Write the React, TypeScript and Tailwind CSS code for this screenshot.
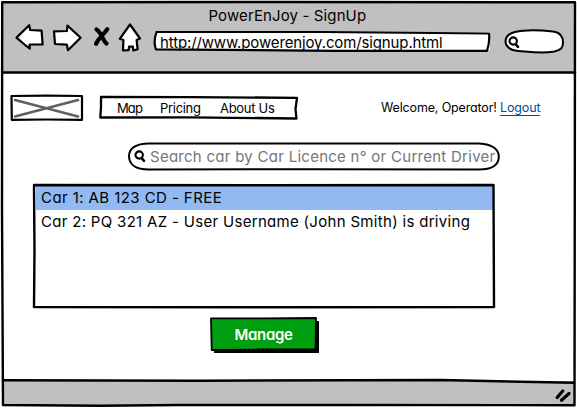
import React from "react";

function Outline({ width, height, children }: { width: number; height: number; children: React.ReactNode }) {
  return (
    <svg
      className="pointer-events-none absolute left-0 top-0 overflow-visible"
      width={width}
      height={height}
      fill="none"
      stroke="#000"
      strokeWidth="2.2"
      strokeLinejoin="round"
      strokeLinecap="round"
    >
      {children}
    </svg>
  );
}

function Magnifier() {
  return (
    <svg className="shrink-0" width="12" height="13" viewBox="0 0 12 13" fill="none" stroke="#000" strokeWidth="2.1" strokeLinecap="round">
      <ellipse cx="5.2" cy="5" rx="3.7" ry="3.6" />
      <path d="M7.6 8.2 10 10.8" strokeWidth="2.6" />
    </svg>
  );
}

function Toolbar() {
  return (
    <header className="relative h-[72px] shrink-0 bg-[#c0c0c0]">
      <h1 className="pl-[208.5px] pt-[5px] text-[15px] leading-5 font-normal tracking-[0.12px]">PowerEnJoy - SignUp</h1>
      <div className="mt-px flex h-7 items-center pl-[15px]">
        <svg className="mt-[-6px] shrink-0" width="130" height="30" viewBox="0 0 130 30" fill="#fff" stroke="#000" strokeWidth="2.2" strokeLinejoin="round">
          <path d="M1.5 14.6 14.2 2.2 15.2 7 26.6 7.6 27.6 21.4 14.6 21.5 14.8 25.6 9.5 21.5Z" />
          <path d="M39 8.4 52 8 52.4 2.5 65.6 14.8 53 27.3 51.8 21.6 40 21Z" />
          <path d="M81.5 6.5c5 3 6 11 10 14M92.3 6.2c-4 6-8 8-11.3 14.5" fill="none" strokeWidth="4.2" strokeLinecap="round" />
          <path d="m115 1.5 10 14-3.4 1.5 1 9.2-4.3 1.3-.4-3.8-3.8-.2-.5 3.7-5.6.3.4-10.5-3.6-1.2Z" />
        </svg>
        <div className="relative ml-[10px] h-[18px] w-[335px] bg-white pl-[5px] pt-px">
          <p className="whitespace-nowrap pt-px text-[15px] leading-[18px] tracking-[-0.13px]">http://www.powerenjoy.com/signup.html</p>
          <Outline width={335} height={19}>
            <path d="M1.5 0 167 0 334 1.5 Q335 10 332 18.8 L180 18.8 1 17.3 Q-2 10 1.5 0" strokeWidth="2.2" />
          </Outline>
        </div>
        <div className="relative ml-[15px] flex h-[23px] w-[59px] items-center">
          <Outline width={59} height={23}>
            <path d="M10 2C20-.5 35 0 48 1.5 55 2 58 7 58 12 58.3 18 55.5 20 49.5 21.5 36 24 22 21.5 13 21 5 20.5.5 16 .5 11.5.7 7 4 3.5 10 2Z" fill="#fff" strokeWidth="2" />
          </Outline>
          <div className="relative ml-[3px] mt-[2px]"><Magnifier /></div>
        </div>
      </div>
    </header>
  );
}

function PageHeader() {
  return (
    <div className="flex h-[24px] items-center pl-[11px] text-[13px] leading-4">
      <div className="relative h-6 w-[72px]">
        <Outline width={72} height={24}>
          <path d="m4 4 63 16.5M67 4 4 20.5" stroke="#606060" strokeWidth="2.6" />
          <path d="M.5 0 36-.3 71 0V23.8L35 23.5.8 23.8Z" strokeWidth="2.2" />
        </Outline>
      </div>
      <nav className="relative ml-[17px] flex h-[22px] w-[197px] items-center pl-[17px]">
        <a className="w-[43px] tracking-[-0.9px]">Map</a>
        <a className="w-[60px] tracking-[-0.3px]">Pricing</a>
        <a className="whitespace-nowrap tracking-[-0.3px]">About Us</a>
        <Outline width={197} height={22}>
          <path d="M1 -.1 90 .1 197 .8 195.5 12 196.5 21.5 90 20.3.3 20.5 1 10Z" strokeWidth="2.3" />
        </Outline>
      </nav>
      <p className="ml-[84px] whitespace-nowrap text-[12.5px] tracking-[-0.15px]">
        Welcome, Operator! <a className="border-b border-[#004b9b] text-[#004b9b]">Logout</a>
      </p>
    </div>
  );
}

function SearchField() {
  return (
    <div className="relative ml-[129px] mt-[23px] flex h-[27px] w-[371px] items-center pl-[5px]">
      <Magnifier />
      <span className="ml-[4px] whitespace-nowrap text-[15px] leading-5 tracking-[0.27px] text-[#74747e]">Search car by Car Licence n° or Current Driver</span>
      <Outline width={371} height={26}>
        <path d="M20 .5 Q190 1 350 .5 C364 1 370 7 369.8 14 369.6 22 364 26.5 350 26.5 L180 26.2 20 26.5C5 26.5 0 20 0 13 0 6 6 .5 20 .5Z" strokeWidth="2" />
      </Outline>
    </div>
  );
}

function CarList() {
  return (
    <ul className="relative ml-[34px] mt-[15px] flex h-[122px] w-[460px] flex-col pt-px text-[15px] leading-6">
      <li className="ml-[2px] h-6 w-[457px] bg-[#93b9f2] pl-[5px] tracking-[0.42px]">Car 1: AB 123 CD - FREE</li>
      <li className="pl-[7px] whitespace-nowrap tracking-[0.31px]">Car 2: PQ 321 AZ - User Username (John Smith) is driving</li>
      <Outline width={460} height={122}>
        <path d="M0 0 230 .2 459.5 0 460 122 240 122.3 0 122 .5 65Z" strokeWidth="2.4" />
      </Outline>
    </ul>
  );
}

function ManageButton() {
  return (
    <button className="relative ml-[211px] mt-[11px] flex h-8 w-[105px] items-center justify-center bg-[#009f12] text-[15px] pt-[3px] font-semibold tracking-[-0.3px] text-white shadow-[3px_3px_0_#000]">
      Manage
      <Outline width={105} height={32}>
        <path d="M0 .3 52 .4 105 0 104.5 31.3 50 31.5.7 32Z" strokeWidth="1.8" />
      </Outline>
    </button>
  );
}

export default function App() {
  return (
    <div className="relative flex h-[408px] w-[577px] flex-col overflow-hidden bg-white pt-px font-[Inter,'Noto_Sans',sans-serif] text-black [font-feature-settings:'cv11']">
      <Toolbar />
      <main className="h-[308px] shrink-0 pt-[23px]">
        <PageHeader />
        <SearchField />
        <CarList />
        <ManageButton />
      </main>
      <footer className="relative h-[24px] shrink-0 bg-[#c0c0c0]">
        <svg className="absolute right-[4px] top-[6px]" width="18" height="17" viewBox="0 0 18 17" stroke="#000" strokeWidth="3.2" strokeLinecap="round" fill="none">
          <path d="M2.2 10.5 7.7 4M6.5 13.2 14 6.5" />
        </svg>
      </footer>
      <Outline width={577} height={408}>
        <path d="M0 0H577V408H0Z M2.5 2.3H574.5V405H2.8Z" fill="#fff" fillRule="evenodd" stroke="none" />
        <path d="M2.2 2.3 280 2 575 2.3 574.8 180 574.5 405.2 350 405 180 405 100 405.8 3 405 2 210Z" strokeWidth="2.4" />
        <path d="M3 72.5H575M3 380.3 200 380.8 440 380 574 382.8" strokeWidth="2.5" />
      </Outline>
    </div>
  );
}
